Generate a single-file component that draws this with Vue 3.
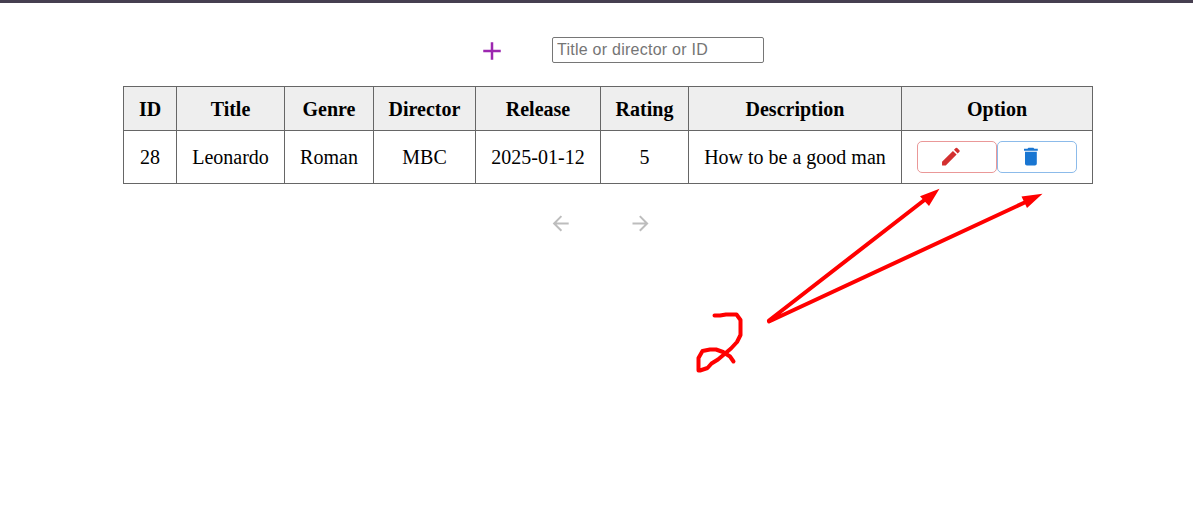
<script setup>
const columns = [
  { name: 'ID', width: 53 },
  { name: 'Title', width: 108 },
  { name: 'Genre', width: 89 },
  { name: 'Director', width: 102 },
  { name: 'Release', width: 125 },
  { name: 'Rating', width: 88 },
  { name: 'Description', width: 213 },
  { name: 'Option', width: 191 },
]
const rows = [['28', 'Leonardo', 'Roman', 'MBC', '2025-01-12', '5', 'How to be a good man']]
</script>

<template>
  <div class="page">
    <div class="topline"></div>
    <div class="toolbar">
      <button class="add" aria-label="Add">
        <svg width="30" height="30" viewBox="0 0 24 24"><path d="M19 13h-6v6h-2v-6H5v-2h6V5h2v6h6z" /></svg>
      </button>
      <input class="search" type="text" placeholder="Title or director or ID" />
    </div>
    <table>
      <colgroup>
        <col v-for="c in columns" :key="c.name" :style="{ width: c.width + 'px' }" />
      </colgroup>
      <thead>
        <tr><th v-for="c in columns" :key="c.name">{{ c.name }}</th></tr>
      </thead>
      <tbody>
        <tr v-for="r in rows" :key="r[0]">
          <td v-for="v in r" :key="v">{{ v }}</td>
          <td>
            <div class="actions">
              <button class="edit" aria-label="Edit">
                <svg width="24" height="24" viewBox="-0.1 0.2 24.4 24.4"><path d="M3 17.25V21h3.75L17.81 9.94l-3.75-3.75zM20.71 7.04c.39-.39.39-1.02 0-1.41l-2.34-2.34a.9959.9959 0 0 0-1.41 0l-1.83 1.83 3.75 3.75z" /></svg>
              </button>
              <button class="delete" aria-label="Delete">
                <svg width="24" height="24" viewBox="-0.1 0.2 24.4 24.4"><path d="M6 19c0 1.1.9 2 2 2h8c1.1 0 2-.9 2-2V7H6zM19 4h-3.5l-1-1h-5l-1 1H5v2h14z" /></svg>
              </button>
            </div>
          </td>
        </tr>
      </tbody>
    </table>
    <div class="pager">
      <button aria-label="Previous">
        <svg width="24" height="24" viewBox="0.3 -0.4 24 24"><path d="M20 11H7.83l5.59-5.59L12 4l-8 8 8 8 1.41-1.41L7.83 13H20z" /></svg>
      </button>
      <button aria-label="Next">
        <svg width="24" height="24" viewBox="0.5 -0.4 24 24"><path d="m12 4-1.41 1.41L16.17 11H4v2h12.17l-5.58 5.59L12 20l8-8z" /></svg>
      </button>
    </div>
    <svg class="marks" width="1193" height="526" viewBox="0 0 1193 526">
      <g fill="none" stroke="#f00" stroke-width="4" stroke-linecap="round" stroke-linejoin="round">
        <path d="M769 320.500L927 198M769 321.500L1029 200.500" />
        <path d="M714.500 315.500H720L726 314.500H736.500L740.500 320V335L737 342L731 348.500L724.500 354L718 359.500L711.500 363.500L707.500 368L700 370.500H698.500V358L702.500 351L710 349.500H716L723 352L730 356.500L733.500 361.500" />
      </g>
      <path fill="#f00" d="M939.500 188.800L920 196.300L929 206ZM1042.500 193.800L1021.500 196.500L1027 208Z" />
    </svg>
  </div>
</template>

<style>
body {
  background: #fff;
}
</style>

<style scoped>
.page {
  position: relative;
  height: 526px;
  overflow: hidden;
  font-family: "Liberation Serif", "Times New Roman", serif;
  font-size: 20px;
  color: #000;
}
.topline {
  height: 3px;
  background: #463f50;
}
button {
  display: flex;
  align-items: center;
  box-sizing: border-box;
  padding: 0;
  border: 0;
  background: none;
}
svg {
  display: block;
  fill: currentColor;
}
.toolbar {
  display: flex;
  align-items: flex-start;
  height: 49px;
  margin-left: 477px;
  padding-top: 34px;
  gap: 45px;
}
.add {
  margin-top: -1px;
  color: #9c27b0;
}
.search {
  box-sizing: border-box;
  width: 212px;
  height: 26px;
  padding: 1px 4px 2px;
  border: 1px solid #767676;
  border-radius: 2px;
  font: 16px "Liberation Sans", Arial, sans-serif;
  letter-spacing: 0.25px;
}
.search::placeholder {
  color: #757575;
}
table {
  width: 970px;
  margin-left: 123px;
  table-layout: fixed;
  border-collapse: collapse;
}
th,
td {
  box-sizing: border-box;
  padding: 0;
  border: 1px solid #666;
  text-align: center;
  white-space: nowrap;
}
th {
  height: 44px;
  padding-top: 2px;
  background: #eee;
}
td {
  height: 53px;
}
.actions {
  display: flex;
  margin-left: 15px;
}
.actions button {
  width: 80px;
  height: 32px;
  padding: 0 0 0 21px;
  border: 1px solid;
  border-radius: 5px;
}
.actions .edit {
  border-color: #ea9898;
}
.edit svg {
  color: #d32f2f;
}
.actions .delete {
  border-color: #8cbbea;
}
.delete svg {
  color: #1976d2;
}
.pager {
  display: flex;
  gap: 56px;
  margin: 27px 0 0 549px;
  color: #bdbdbd;
}
.pager button {
  color: inherit;
}
.marks {
  position: absolute;
  top: 0;
  left: 0;
  pointer-events: none;
}
</style>
